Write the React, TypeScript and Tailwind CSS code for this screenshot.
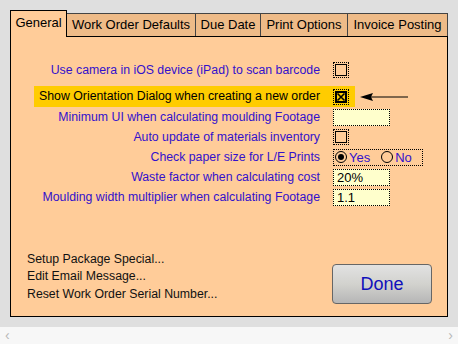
import React from "react";

const LABEL = "text-[#3311cc]";

function Check({ checked }: { checked?: boolean }) {
  return (
    <div className="w-[16px] h-[16px] border border-dotted border-black flex items-center justify-center">
      <svg width="12" height="12" viewBox="0 0 12 12">
        {checked ? (
          <>
            <rect x="1" y="1" width="10" height="10" fill="none" stroke="#000" strokeWidth="2" />
            <path d="M2.5 2.5 L9.5 9.5 M9.5 2.5 L2.5 9.5" stroke="#000" strokeWidth="1.6" />
          </>
        ) : (
          <rect x="0.5" y="0.5" width="11" height="11" fill="none" stroke="#000" strokeWidth="1" />
        )}
      </svg>
    </div>
  );
}

function Field({ value }: { value?: string }) {
  return (
    <div className="w-[57px] h-[17px] border border-dotted border-black bg-[#ffffcc] pl-[3px] flex items-center text-[13px] text-black leading-none">
      {value}
    </div>
  );
}

function Radio({ on }: { on?: boolean }) {
  return (
    <div className="w-[12px] h-[12px] rounded-full border border-black flex items-center justify-center">
      {on && <div className="w-[6px] h-[6px] rounded-full bg-black" />}
    </div>
  );
}

function Row({ label, children }: { label: string; children: React.ReactNode }) {
  return (
    <div className="h-[20px] ml-[23px] flex items-center gap-[13px]">
      <div className={`w-[286px] text-right text-[12.3px] ${LABEL} whitespace-nowrap`}>{label}</div>
      {children}
    </div>
  );
}

export default function App() {
  const tabBase =
    "flex items-center justify-center text-[13px] text-black whitespace-nowrap";
  return (
    <div className="w-[458px] h-[344px] bg-[#dfdfdf] font-['Liberation_Sans',Arial,sans-serif] flex flex-col overflow-hidden">
      <div className="pt-[10px] pl-[10px]">
        <div className="flex items-end h-[26px]">
          <div className={`${tabBase} w-[57px] h-[27px] mb-[-1px] relative z-10 bg-[#ffcc99] border border-b-0 border-black pb-[2px]`}>
            General
          </div>
          <div className={`${tabBase} w-[129px] h-[23px] bg-[#eebb88] border-t border-r border-[#444]`}>
            Work Order Defaults
          </div>
          <div className={`${tabBase} w-[65px] h-[23px] bg-[#eebb88] border-t border-r border-[#444]`}>
            Due Date
          </div>
          <div className={`${tabBase} w-[87px] h-[23px] bg-[#eebb88] border-t border-r border-[#444]`}>
            Print Options
          </div>
          <div className={`${tabBase} w-[100px] h-[23px] bg-[#eebb88] border-t border-r border-[#444]`}>
            Invoice Posting
          </div>
        </div>
        <div className="w-[438px] h-[281px] bg-[#ffcc99] border border-black flex flex-col pt-[23px]">
          <Row label="Use camera in iOS device (iPad) to scan barcode">
            <Check />
          </Row>
          <div className="mt-[6px] h-[21px] flex items-center">
            <div className="ml-[23px] w-[321px] h-[21px] bg-[#ffcc00] flex items-center gap-[13px]">
              <div className="w-[286px] text-right text-[12.3px] text-black whitespace-nowrap">
                Show Orientation Dialog when creating a new order
              </div>
              <Check checked />
            </div>
            <svg width="48" height="10" viewBox="0 0 48 10" className="ml-[5px]">
              <path d="M0 5 L13 1 L11 5 L13 9 Z" fill="#000" />
              <line x1="10" y1="5" x2="48" y2="5" stroke="#000" strokeWidth="1.2" />
            </svg>
          </div>
          <Row label="Minimum UI when calculating moulding Footage">
            <Field />
          </Row>
          <Row label="Auto update of materials inventory">
            <Check />
          </Row>
          <Row label="Check paper size for L/E Prints">
            <div className="w-[90px] h-[17px] border border-dotted border-black flex items-center pl-[1px] text-[13px] leading-none">
              <Radio on />
              <span className={`${LABEL} ml-[2px]`}>Yes</span>
              <div className="ml-[11px]">
                <Radio />
              </div>
              <span className={`${LABEL} ml-[2px]`}>No</span>
            </div>
          </Row>
          <Row label="Waste factor when calculating cost">
            <Field value="20%" />
          </Row>
          <Row label="Moulding width multiplier when calculating Footage">
            <Field value="1.1" />
          </Row>
          <div className="mt-auto flex items-end justify-between pb-[12px]">
            <div className="pl-[16px] mb-[1px] text-[12.3px] leading-[17.5px] text-[#111]">
              <div>Setup Package Special...</div>
              <div>Edit Email Message...</div>
              <div>Reset Work Order Serial Number...</div>
            </div>
            <button className="mr-[15px] w-[100px] h-[40px] rounded-[4px] border border-[#666] bg-linear-to-b from-[#e2e2e2] via-[#d2d2ce] to-[#b6b6b6] text-[18px] text-[#1010bb] flex items-center justify-center">
              Done
            </button>
          </div>
        </div>
      </div>
      <div className="mt-[10px] h-[17px] bg-[#f7f7f7] flex items-center justify-between px-[5px] text-[#b8b8b8] text-[14px]">
        <span>‹</span>
        <span>›</span>
      </div>
    </div>
  );
}
